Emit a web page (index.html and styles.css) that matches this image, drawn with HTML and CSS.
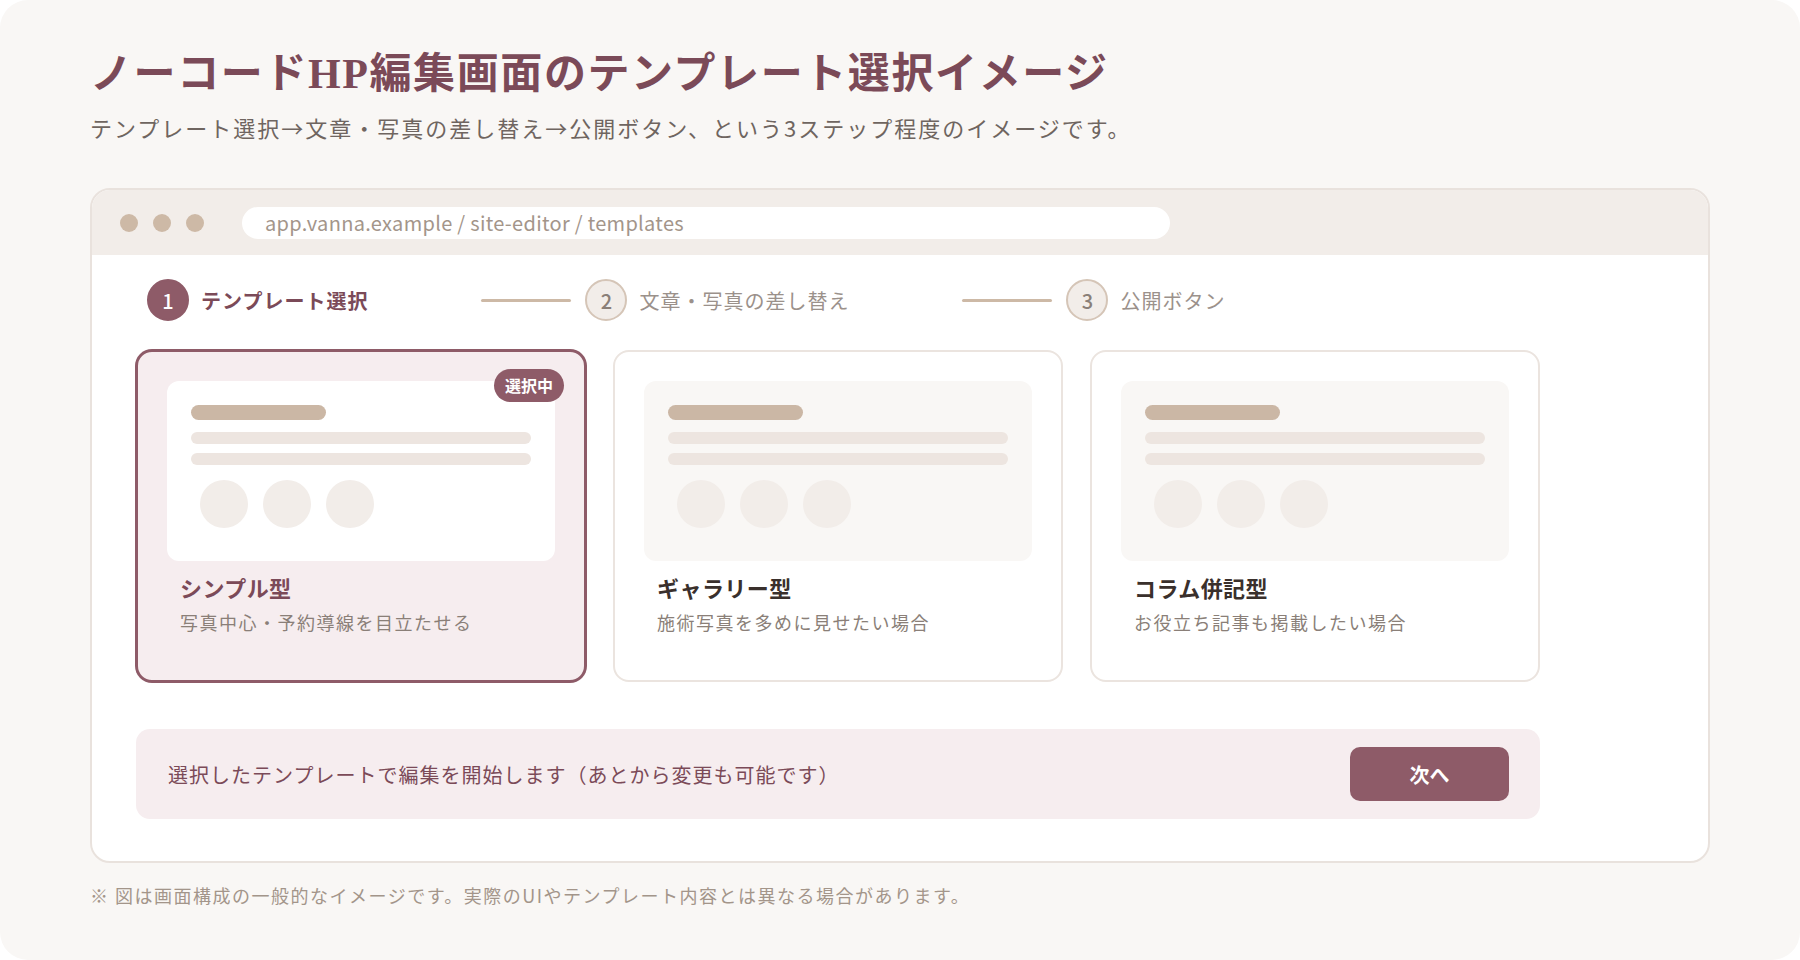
FILE: index.html
```html
<!DOCTYPE html>
<html lang="ja">
<head>
  <meta charset="UTF-8" />
  <meta name="viewport" content="width=device-width, initial-scale=1.0"/>
  <title>ノーコードHP編集画面のテンプレート選択イメージ</title>
  <link rel="stylesheet" href="styles.css">
</head>
<body>
  <div class="page">
    <h1 class="page-title">ノーコードHP編集画面のテンプレート選択イメージ</h1>
    <p class="page-lead">テンプレート選択→文章・写真の差し替え→公開ボタン、という3ステップ程度のイメージです。</p>

    <div class="window">
      <div class="window-bar">
        <span class="dot"></span>
        <span class="dot"></span>
        <span class="dot"></span>
        <div class="url">app.vanna.example / site-editor / templates</div>
      </div>

      <div class="window-body">
        <div class="steps">
          <div class="step active">
            <span class="step-num">1</span>
            <span class="step-label">テンプレート選択</span>
          </div>
          <span class="step-line"></span>
          <div class="step">
            <span class="step-num">2</span>
            <span class="step-label">文章・写真の差し替え</span>
          </div>
          <span class="step-line"></span>
          <div class="step">
            <span class="step-num">3</span>
            <span class="step-label">公開ボタン</span>
          </div>
        </div>

        <div class="cards">
          <div class="card selected">
            <span class="badge">選択中</span>
            <div class="preview">
              <div class="pv-head"></div>
              <div class="pv-line"></div>
              <div class="pv-line second"></div>
              <div class="pv-circles">
                <span></span><span></span><span></span>
              </div>
            </div>
            <div class="card-title">シンプル型</div>
            <div class="card-desc">写真中心・予約導線を目立たせる</div>
          </div>

          <div class="card">
            <div class="preview">
              <div class="pv-head"></div>
              <div class="pv-line"></div>
              <div class="pv-line second"></div>
              <div class="pv-circles">
                <span></span><span></span><span></span>
              </div>
            </div>
            <div class="card-title">ギャラリー型</div>
            <div class="card-desc">施術写真を多めに見せたい場合</div>
          </div>

          <div class="card">
            <div class="preview">
              <div class="pv-head"></div>
              <div class="pv-line"></div>
              <div class="pv-line second"></div>
              <div class="pv-circles">
                <span></span><span></span><span></span>
              </div>
            </div>
            <div class="card-title">コラム併記型</div>
            <div class="card-desc">お役立ち記事も掲載したい場合</div>
          </div>
        </div>

        <div class="action-bar">
          <span class="action-text">選択したテンプレートで編集を開始します（あとから変更も可能です）</span>
          <button class="next-btn">次へ</button>
        </div>
      </div>
    </div>

    <p class="note">※ 図は画面構成の一般的なイメージです。実際のUIやテンプレート内容とは異なる場合があります。</p>
  </div>
</body>
</html>
```

FILE: styles.css
```css
/* Base */
body {
  margin: 0;
  background-color: #ffffff;
  font-family: "Noto Sans CJK JP", "Noto Sans", sans-serif;
  color: #3a302c;
}

.page {
  width: 1800px;
  height: 960px;
  box-sizing: border-box;
  padding: 46px 90px 0;
  background-color: #f9f7f5;
  border-radius: 28px;
  overflow: hidden;
}

.page-title {
  margin: 0;
  font-family: "Liberation Serif", "Noto Sans CJK JP", serif;
  font-size: 42px;
  line-height: 56px;
  font-weight: 700;
  letter-spacing: 1.6px;
  color: #7b4a58;
}

.page-lead {
  margin: 9px 0 0;
  font-size: 22px;
  line-height: 32px;
  letter-spacing: 2px;
  color: #6f6560;
}

/* Browser window */
.window {
  margin-top: 45px;
  border: 2px solid #e9e2dd;
  border-radius: 20px;
  background-color: #ffffff;
  overflow: hidden;
}

.window-bar {
  height: 65px;
  display: flex;
  align-items: center;
  gap: 15px;
  padding: 0 28px;
  background-color: #f2ede9;
}

.dot {
  width: 18px;
  height: 18px;
  border-radius: 50%;
  background-color: #cdb9a6;
}

.url {
  margin-left: 23px;
  width: 928px;
  height: 32px;
  box-sizing: border-box;
  padding-left: 23px;
  border-radius: 16px;
  background-color: #ffffff;
  font-size: 20px;
  line-height: 32px;
  letter-spacing: 0.3px;
  color: #a3958a;
}

.window-body {
  padding: 24px 44px 42px;
}

/* Steps */
.steps {
  display: flex;
  align-items: center;
  gap: 14px;
  padding-left: 11px;
}

.step {
  display: flex;
  align-items: center;
  gap: 12px;
}

.step-num {
  width: 42px;
  height: 42px;
  box-sizing: border-box;
  border-radius: 50%;
  border: 2px solid #d5c5b7;
  background-color: #f2ede9;
  color: #8a7f78;
  font-size: 20px;
  font-weight: 500;
  display: flex;
  align-items: center;
  justify-content: center;
}

.step-label {
  font-size: 20px;
  letter-spacing: 0.05em;
  color: #9b918b;
}

.step.active .step-num {
  border-color: #8e5b68;
  background-color: #8e5b68;
  color: #ffffff;
}

.step.active .step-label {
  font-weight: 700;
  color: #7b4a58;
}

.step-line {
  width: 90px;
  height: 3px;
  margin-left: 99px;
  border-radius: 2px;
  background-color: #cdb9a6;
}

/* Template cards */
.cards {
  display: grid;
  grid-template-columns: repeat(3, 450px);
  gap: 27px;
  margin-top: 29px;
}

.card {
  position: relative;
  border: 2px solid #ebe4df;
  border-radius: 16px;
  padding: 29px 29px 45px;
  background-color: #ffffff;
}

.card.selected {
  border-color: #8e5b68;
  box-shadow: 0 0 0 1px #8e5b68;
  background-color: #f6edef;
}

.badge {
  position: absolute;
  top: 17px;
  right: 20px;
  height: 33px;
  padding: 0 11px;
  border-radius: 17px;
  background-color: #8e5b68;
  color: #ffffff;
  font-size: 16px;
  font-weight: 700;
  line-height: 33px;
}

.preview {
  height: 180px;
  box-sizing: border-box;
  padding: 24px;
  border-radius: 12px;
  background-color: #f9f7f5;
}

.card.selected .preview {
  background-color: #ffffff;
}

.pv-head {
  width: 135px;
  height: 15px;
  border-radius: 8px;
  background-color: #cbb7a5;
}

.pv-line {
  height: 12px;
  margin-top: 12px;
  border-radius: 6px;
  background-color: #ede5e0;
}

.pv-line.second {
  margin-top: 9px;
}

.pv-circles {
  display: flex;
  gap: 15px;
  margin-top: 15px;
  padding-left: 9px;
}

.pv-circles span {
  width: 48px;
  height: 48px;
  border-radius: 50%;
  background-color: #f2ede9;
}

.card-title {
  margin-top: 11px;
  padding-left: 13px;
  font-size: 22px;
  line-height: 30px;
  font-weight: 700;
  letter-spacing: 0.02em;
  color: #3a302c;
}

.card.selected .card-title {
  color: #7b4a58;
}

.card-desc {
  margin-top: 7px;
  padding-left: 13px;
  font-size: 18px;
  line-height: 26px;
  letter-spacing: 1.5px;
  color: #8a7f78;
}

/* Bottom action bar */
.action-bar {
  width: 1404px;
  height: 90px;
  box-sizing: border-box;
  margin-top: 47px;
  padding: 0 31px 0 32px;
  display: flex;
  align-items: center;
  justify-content: space-between;
  border-radius: 14px;
  background-color: #f6edef;
}

.action-text {
  font-size: 20px;
  letter-spacing: 1px;
  color: #7b4a58;
}

.next-btn {
  width: 159px;
  height: 54px;
  border: none;
  border-radius: 10px;
  background-color: #8e5b68;
  color: #ffffff;
  font-family: inherit;
  font-size: 20px;
  font-weight: 700;
}

.note {
  margin: 19px 0 0;
  font-size: 18px;
  line-height: 26px;
  letter-spacing: 1.5px;
  color: #a3958a;
}
```
